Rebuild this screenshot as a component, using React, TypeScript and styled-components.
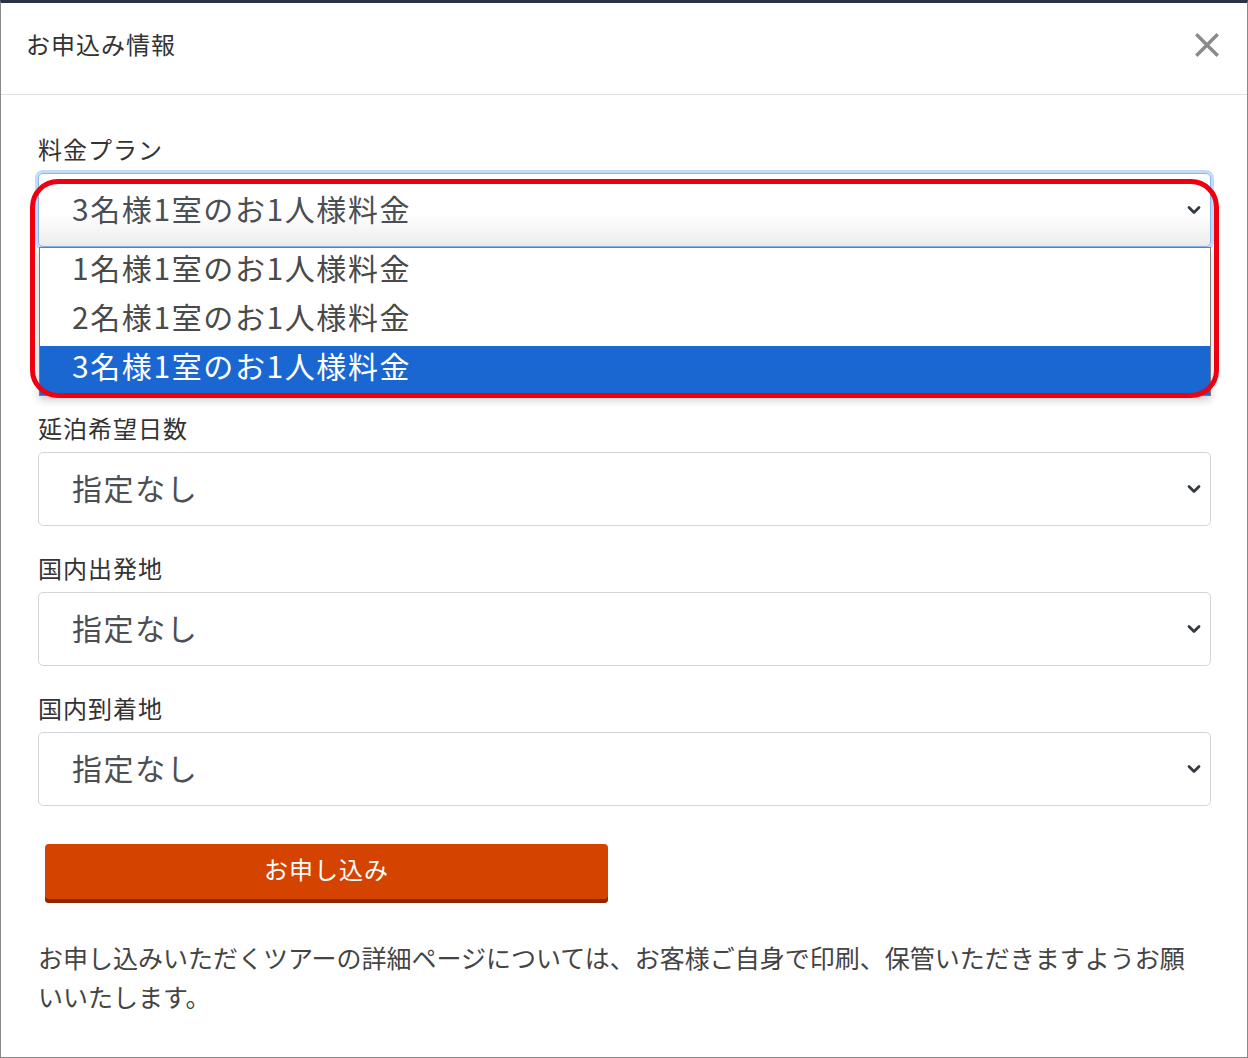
import React from 'react';
import styled, { createGlobalStyle } from 'styled-components';

const GlobalStyle = createGlobalStyle`
  html, body {
    margin: 0;
    padding: 0;
    background: #ffffff;
  }
  body {
    font-family: "Noto Sans CJK JP", "Noto Sans", sans-serif;
    color: #333;
  }
  * {
    box-sizing: border-box;
  }
`;

const planOptions = [
  '1名様1室のお1人様料金',
  '2名様1室のお1人様料金',
  '3名様1室のお1人様料金',
];

const otherFields = ['延泊希望日数', '国内出発地', '国内到着地'];

function Chevron() {
  return (
    <ChevronIcon width="14" height="10" viewBox="0 0 14 10">
      <path d="M2 2.5 L7 7.5 L12 2.5" fill="none" stroke="#343a40" strokeWidth="2.8" strokeLinecap="round" strokeLinejoin="round" />
    </ChevronIcon>
  );
}

function CloseIcon() {
  return (
    <svg width="24" height="24" viewBox="0 0 24 24">
      <path d="M2.5 2.5 L21.5 21.5 M21.5 2.5 L2.5 21.5" stroke="#8a8a8a" strokeWidth="3.4" strokeLinecap="square" />
    </svg>
  );
}

function App() {
  return (
    <>
      <GlobalStyle />
      <Frame>
        <Header>
          <Title>お申込み情報</Title>
          <CloseButton aria-label="close">
            <CloseIcon />
          </CloseButton>
        </Header>
        <Body>
          <FieldGroup>
            <Label>料金プラン</Label>
            <SelectWrap>
              <SelectBox $focused>
                3名様1室のお1人様料金
                <Chevron />
              </SelectBox>
              <OptionList>
                {planOptions.map((opt, i) => (
                  <OptionItem key={opt} $selected={i === planOptions.length - 1}>
                    {opt}
                  </OptionItem>
                ))}
              </OptionList>
              <Highlight />
            </SelectWrap>
          </FieldGroup>
          <CoveredRow />
          {otherFields.map((label) => (
            <FieldGroup key={label}>
              <Label>{label}</Label>
              <SelectWrap>
                <SelectBox>
                  指定なし
                  <Chevron />
                </SelectBox>
              </SelectWrap>
            </FieldGroup>
          ))}
          <SubmitButton type="button">お申し込み</SubmitButton>
          <Note>
            お申し込みいただくツアーの詳細ページについては、お客様ご自身で印刷、保管いただきますようお願いいたします。
          </Note>
        </Body>
      </Frame>
    </>
  );
}

const Frame = styled.div`
  width: 1248px;
  height: 1058px;
  border: 1px solid #8a8a8a;
  border-top: 3px solid #2a3346;
  background: #fff;
  overflow: hidden;
`;

const Header = styled.div`
  height: 92px;
  display: flex;
  align-items: center;
  justify-content: space-between;
  padding: 0 28px 8px 25px;
  border-bottom: 1px solid #e2e2e2;
`;

const Title = styled.h1`
  margin: 0 0 3px;
  font-size: 24px;
  font-weight: 400;
  color: #333;
  letter-spacing: 1px;
`;

const CloseButton = styled.button`
  border: none;
  background: none;
  padding: 0;
  display: flex;
  cursor: pointer;
`;

const Body = styled.div`
  padding: 36px 36px 0 37px;
  display: flex;
  flex-direction: column;
`;

const FieldGroup = styled.div`
  display: flex;
  flex-direction: column;
  margin-bottom: 24px;
`;

const CoveredRow = styled.div`
  height: 116px;
  margin-bottom: 23px;
`;

const Label = styled.label`
  font-size: 24px;
  line-height: 36px;
  color: #333;
  margin-bottom: 6px;
  letter-spacing: 1px;
`;

const SelectWrap = styled.div`
  position: relative;
`;

const SelectBox = styled.div<{ $focused?: boolean }>`
  position: relative;
  height: 74px;
  display: flex;
  align-items: center;
  padding: 0 52px 5px 33px;
  font-size: 30px;
  letter-spacing: 1.6px;
  color: #4a4f55;
  border-radius: 5px;
  border: 1px solid ${(p) => (p.$focused ? '#86b7f0' : '#d2d6da')};
  box-shadow: ${(p) => (p.$focused ? '0 0 0 3px rgba(120, 175, 240, 0.45)' : 'none')};
  background: ${(p) => (p.$focused ? 'linear-gradient(#ffffff 55%, #ececec)' : '#fff')};
`;

const ChevronIcon = styled.svg`
  position: absolute;
  right: 9px;
  top: 50%;
  transform: translateY(-50%);
`;

const OptionList = styled.ul`
  position: absolute;
  top: 74px;
  left: 1px;
  right: 0;
  margin: 0;
  padding: 0;
  list-style: none;
  background: #fff;
  border: 1px solid #7a7a7a;
  box-shadow: 0 4px 8px rgba(0, 0, 0, 0.2);
  z-index: 2;
`;

const OptionItem = styled.li<{ $selected?: boolean }>`
  height: 49px;
  display: flex;
  align-items: center;
  padding: 0 0 11px 32px;
  font-size: 30px;
  letter-spacing: 1.6px;
  color: ${(p) => (p.$selected ? '#ffffff' : '#4a4a4a')};
  background: ${(p) => (p.$selected ? '#1b67d2' : '#ffffff')};
`;

const Highlight = styled.div`
  position: absolute;
  left: -8px;
  top: 6px;
  width: 1189px;
  height: 219px;
  border: 5px solid #ee0010;
  border-radius: 28px;
  z-index: 3;
  pointer-events: none;
`;

const SubmitButton = styled.button`
  align-self: flex-start;
  margin: 14px 0 0 7px;
  width: 563px;
  height: 59px;
  border: none;
  border-radius: 4px;
  background: #d54300;
  box-shadow: inset 0 -4px 0 #8a2a00;
  color: #fff;
  font-family: inherit;
  font-size: 24px;
  letter-spacing: 1px;
  padding-bottom: 11px;
  cursor: pointer;
`;

const Note = styled.p`
  margin: 35px 0 0;
  font-size: 25px;
  line-height: 39px;
  color: #444;
  width: 1170px;
`;

export default App;
